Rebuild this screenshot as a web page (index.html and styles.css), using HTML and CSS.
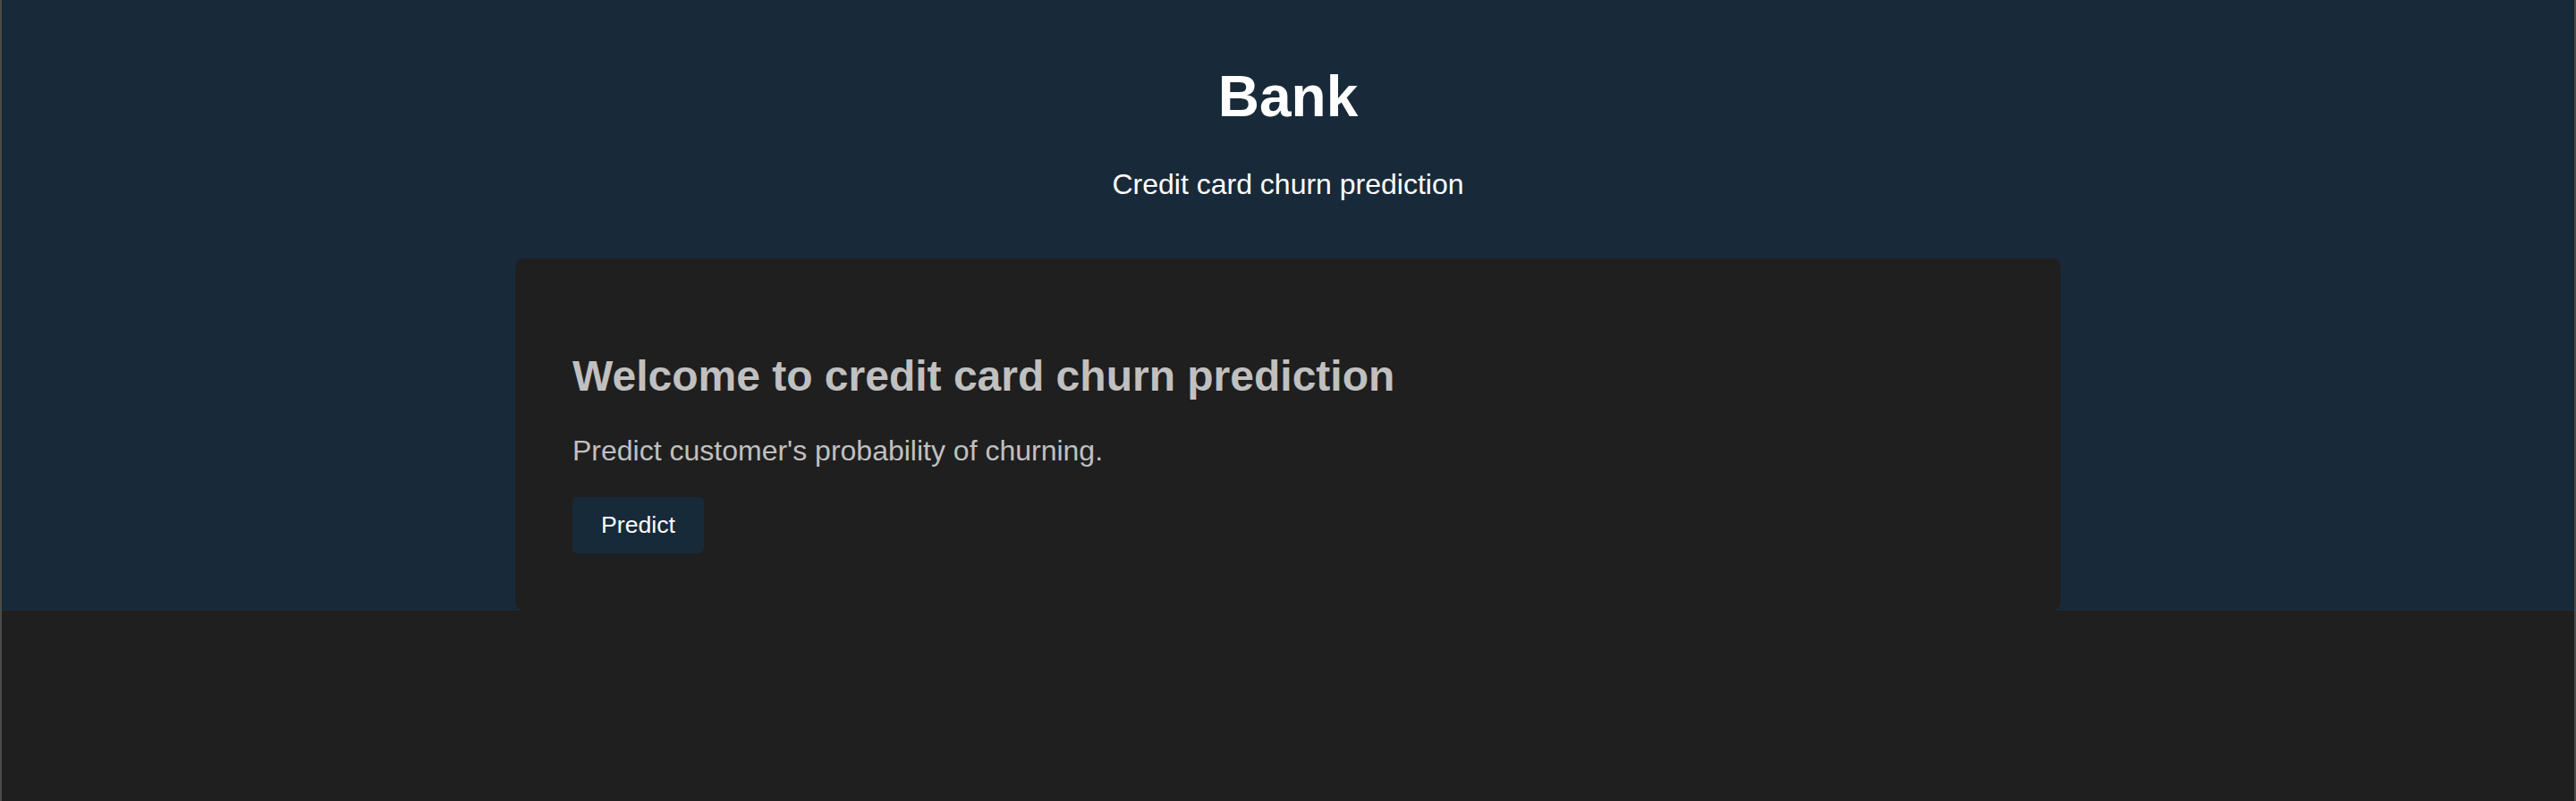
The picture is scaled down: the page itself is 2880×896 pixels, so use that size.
FILE: index.html
```html
<!DOCTYPE html>
<html lang="en">
<head>
<meta charset="utf-8">
<title>Bank</title>
<link rel="stylesheet" href="styles.css">
</head>
<body>
  <header class="hero">
    <h1 class="brand">Bank</h1>
    <p class="tagline">Credit card churn prediction</p>
    <section class="card">
      <h2 class="card-title">Welcome to credit card churn prediction</h2>
      <p class="card-text">Predict customer's probability of churning.</p>
      <button class="btn" type="button">Predict</button>
    </section>
  </header>
</body>
</html>
```
FILE: styles.css
```css
html {
  background: #1f1f1f;
}

body {
  margin: 0;
  min-height: 100vh;
  box-sizing: border-box;
  background: #1f1f1f;
  border-left: 2px solid rgba(255, 255, 255, 0.2);
  border-right: 2px solid rgba(255, 255, 255, 0.2);
  font-family: "Liberation Sans", Arial, sans-serif;
}

.hero {
  background: #182a39;
  padding-top: 71px;
  text-align: center;
}

.brand {
  margin: 0 0 43px;
  font-size: 64px;
  font-weight: bold;
  line-height: normal;
  color: #ffffff;
}

.tagline {
  margin: 0 0 64px;
  font-size: 32px;
  line-height: normal;
  color: #ffffff;
}

.card {
  width: 1728px;
  margin: 0 auto;
  box-sizing: border-box;
  padding: 64px;
  background: #1f1f1f;
  border-radius: 10px;
  text-align: left;
}

.card-title {
  margin: 40px 0 38px;
  font-size: 48px;
  font-weight: bold;
  line-height: normal;
  color: #c0c0c0;
}

.card-text {
  margin: 0 0 33px;
  font-size: 32px;
  line-height: normal;
  color: #c0c0c0;
}

.btn {
  display: block;
  padding: 16px 32px;
  border: 0;
  border-radius: 6px;
  background: #172a3a;
  color: #ffffff;
  font-family: "Liberation Sans", Arial, sans-serif;
  font-size: 26.67px;
  line-height: normal;
  cursor: pointer;
}
```
